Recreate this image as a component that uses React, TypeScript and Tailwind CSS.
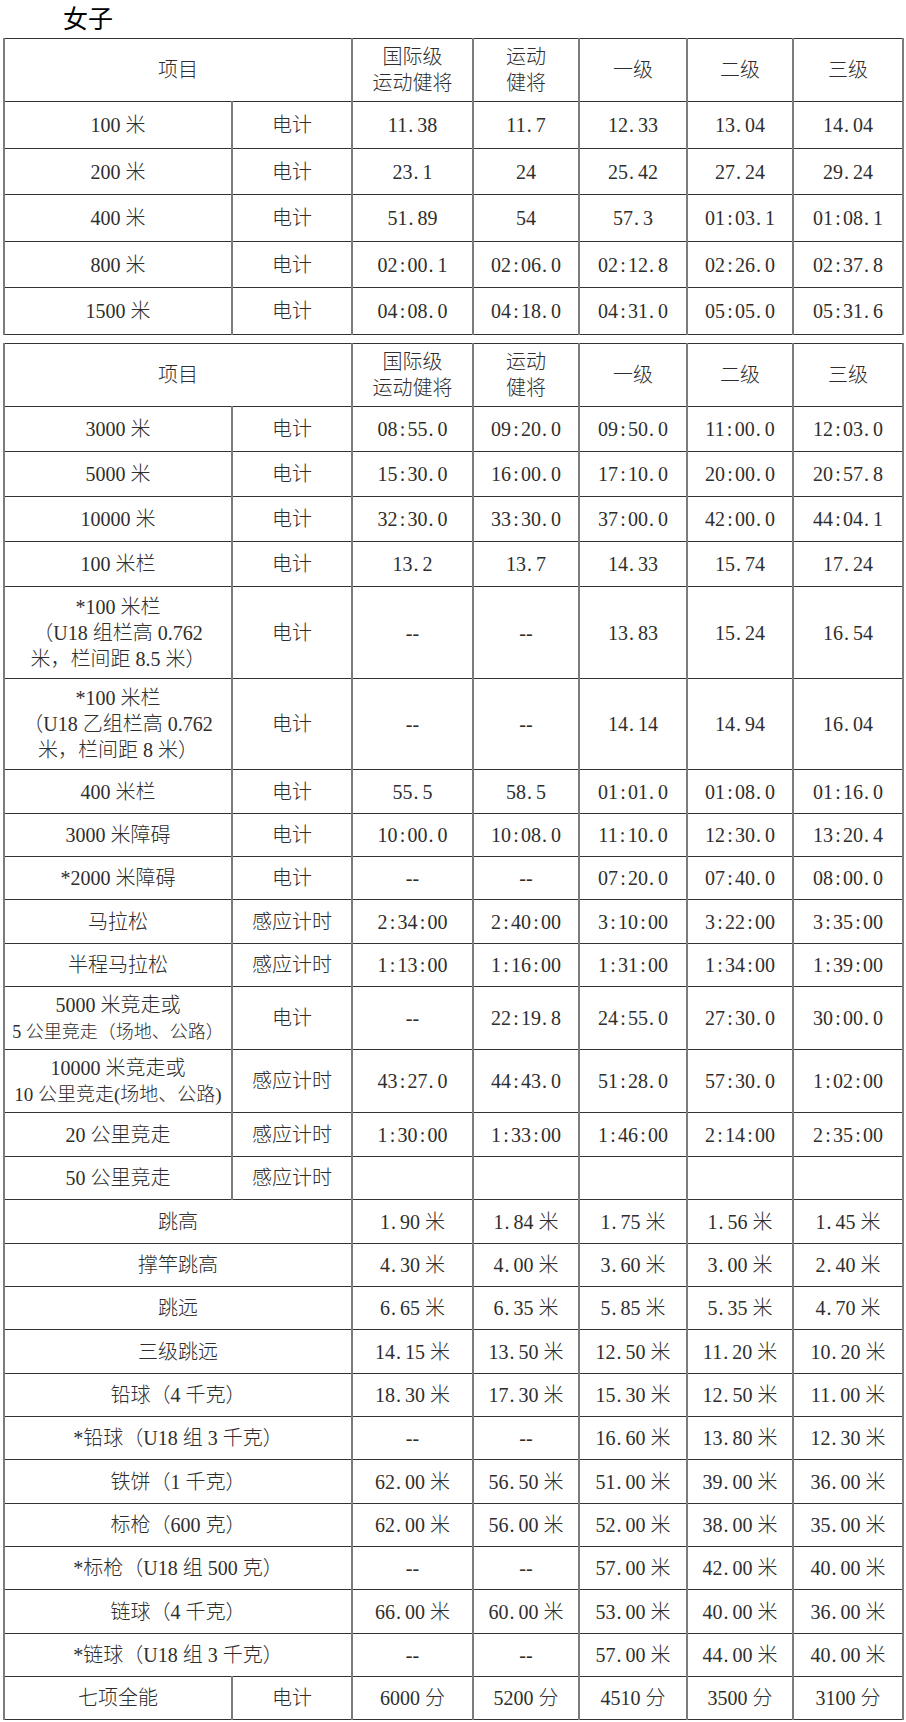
import React from "react";

type Row = {
    name: React.ReactNode;
    timing?: string;
    vals: string[];
    h: string;
};

const cell = "border-x-2 border-x-[#7c7c7c] border-y border-y-[#333] text-center align-middle p-0";

// half-width punctuation like the source document (. and : take a full digit cell)
const fmt = (v: string) =>
    v.split("").map((ch, i) =>
        ch === "." ? (
            <span key={i} className="inline-block w-[10px] pl-[1px] text-left">.</span>
        ) : ch === ":" ? (
            <span key={i} className="inline-block w-[10px] text-center">:</span>
        ) : (
            ch
        )
    );

const header = (
    <tr className="h-[63px]">
        <td colSpan={2} className={cell}>项目</td>
        <td className={cell}>
            国际级
            <br />
            运动健将
        </td>
        <td className={cell}>
            运动
            <br />
            健将
        </td>
        <td className={cell}>一级</td>
        <td className={cell}>二级</td>
        <td className={cell}>三级</td>
    </tr>
);

const sprint: Row[] = [
    { name: "100 米", timing: "电计", vals: ["11.38", "11.7", "12.33", "13.04", "14.04"], h: "h-[47px]" },
    { name: "200 米", timing: "电计", vals: ["23.1", "24", "25.42", "27.24", "29.24"], h: "h-[46px]" },
    { name: "400 米", timing: "电计", vals: ["51.89", "54", "57.3", "01:03.1", "01:08.1"], h: "h-[47px]" },
    { name: "800 米", timing: "电计", vals: ["02:00.1", "02:06.0", "02:12.8", "02:26.0", "02:37.8"], h: "h-[46px]" },
    { name: "1500 米", timing: "电计", vals: ["04:08.0", "04:18.0", "04:31.0", "05:05.0", "05:31.6"], h: "h-[47px]" },
];

const rest: Row[] = [
    { name: "3000 米", timing: "电计", vals: ["08:55.0", "09:20.0", "09:50.0", "11:00.0", "12:03.0"], h: "h-[45px]" },
    { name: "5000 米", timing: "电计", vals: ["15:30.0", "16:00.0", "17:10.0", "20:00.0", "20:57.8"], h: "h-[45px]" },
    { name: "10000 米", timing: "电计", vals: ["32:30.0", "33:30.0", "37:00.0", "42:00.0", "44:04.1"], h: "h-[45px]" },
    { name: "100 米栏", timing: "电计", vals: ["13.2", "13.7", "14.33", "15.74", "17.24"], h: "h-[45px]" },
    {
        name: (
            <>
                *100 米栏
                <br />
                （U18 组栏高 0.762
                <br />
                米，栏间距 8.5 米）
            </>
        ),
        timing: "电计",
        vals: ["--", "--", "13.83", "15.24", "16.54"],
        h: "h-[92px]",
    },
    {
        name: (
            <>
                *100 米栏
                <br />
                （U18 乙组栏高 0.762
                <br />
                米，栏间距 8 米）
            </>
        ),
        timing: "电计",
        vals: ["--", "--", "14.14", "14.94", "16.04"],
        h: "h-[91px]",
    },
    { name: "400 米栏", timing: "电计", vals: ["55.5", "58.5", "01:01.0", "01:08.0", "01:16.0"], h: "h-[44px]" },
    { name: "3000 米障碍", timing: "电计", vals: ["10:00.0", "10:08.0", "11:10.0", "12:30.0", "13:20.4"], h: "h-[43px]" },
    { name: "*2000 米障碍", timing: "电计", vals: ["--", "--", "07:20.0", "07:40.0", "08:00.0"], h: "h-[43px]" },
    { name: "马拉松", timing: "感应计时", vals: ["2:34:00", "2:40:00", "3:10:00", "3:22:00", "3:35:00"], h: "h-[44px]" },
    { name: "半程马拉松", timing: "感应计时", vals: ["1:13:00", "1:16:00", "1:31:00", "1:34:00", "1:39:00"], h: "h-[43px]" },
    {
        name: (
            <>
                5000 米竞走或
                <br />
                <span className="text-[18px] whitespace-nowrap">5 公里竞走（场地、公路）</span>
            </>
        ),
        timing: "电计",
        vals: ["--", "22:19.8", "24:55.0", "27:30.0", "30:00.0"],
        h: "h-[63px]",
    },
    {
        name: (
            <>
                10000 米竞走或
                <br />
                <span className="text-[19px] whitespace-nowrap">10 公里竞走(场地、公路)</span>
            </>
        ),
        timing: "感应计时",
        vals: ["43:27.0", "44:43.0", "51:28.0", "57:30.0", "1:02:00"],
        h: "h-[63px]",
    },
    { name: "20 公里竞走", timing: "感应计时", vals: ["1:30:00", "1:33:00", "1:46:00", "2:14:00", "2:35:00"], h: "h-[44px]" },
    { name: "50 公里竞走", timing: "感应计时", vals: ["", "", "", "", ""], h: "h-[43px]" },
    { name: "跳高", vals: ["1.90 米", "1.84 米", "1.75 米", "1.56 米", "1.45 米"], h: "h-[44px]" },
    { name: "撑竿跳高", vals: ["4.30 米", "4.00 米", "3.60 米", "3.00 米", "2.40 米"], h: "h-[43px]" },
    { name: "跳远", vals: ["6.65 米", "6.35 米", "5.85 米", "5.35 米", "4.70 米"], h: "h-[43px]" },
    { name: "三级跳远", vals: ["14.15 米", "13.50 米", "12.50 米", "11.20 米", "10.20 米"], h: "h-[44px]" },
    { name: "铅球（4 千克）", vals: ["18.30 米", "17.30 米", "15.30 米", "12.50 米", "11.00 米"], h: "h-[43px]" },
    { name: "*铅球（U18 组 3 千克）", vals: ["--", "--", "16.60 米", "13.80 米", "12.30 米"], h: "h-[43px]" },
    { name: "铁饼（1 千克）", vals: ["62.00 米", "56.50 米", "51.00 米", "39.00 米", "36.00 米"], h: "h-[44px]" },
    { name: "标枪（600 克）", vals: ["62.00 米", "56.00 米", "52.00 米", "38.00 米", "35.00 米"], h: "h-[43px]" },
    { name: "*标枪（U18 组 500 克）", vals: ["--", "--", "57.00 米", "42.00 米", "40.00 米"], h: "h-[43px]" },
    { name: "链球（4 千克）", vals: ["66.00 米", "60.00 米", "53.00 米", "40.00 米", "36.00 米"], h: "h-[44px]" },
    { name: "*链球（U18 组 3 千克）", vals: ["--", "--", "57.00 米", "44.00 米", "40.00 米"], h: "h-[43px]" },
    { name: "七项全能", timing: "电计", vals: ["6000 分", "5200 分", "4510 分", "3500 分", "3100 分"], h: "h-[43px]" },
];

const Cols = () => (
    <colgroup>
        <col className="w-[228px]" />
        <col className="w-[120px]" />
        <col className="w-[121px]" />
        <col className="w-[106px]" />
        <col className="w-[108px]" />
        <col className="w-[106px]" />
        <col className="w-[110px]" />
    </colgroup>
);

const Body = ({ rows }: { rows: Row[] }) => (
    <tbody>
        {header}
        {rows.map((r, i) => (
            <tr key={i} className={r.h}>
                {r.timing ? (
                    <>
                        <td className={cell}>{r.name}</td>
                        <td className={cell}>{r.timing}</td>
                    </>
                ) : (
                    <td colSpan={2} className={cell}>{r.name}</td>
                )}
                {r.vals.map((v, j) => (
                    <td key={j} className={cell + " whitespace-nowrap"}>{fmt(v)}</td>
                ))}
            </tr>
        ))}
    </tbody>
);

export default function App() {
    return (
        <div className="bg-white w-[906px] h-[1722px] overflow-hidden pl-[3px]">
            <div className="h-[38px] pl-[60px] text-[25px] leading-[34px] text-black font-['Noto_Sans_CJK_SC',sans-serif]">
                女子
            </div>
            <div className="font-['Liberation_Serif','Noto_Sans_CJK_SC',serif] font-light text-[20px] leading-[26px] text-[#2e2e2e]">
                {/* 短跑 */}
                <table className="w-[899px] table-fixed border-collapse">
                    <Cols />
                    <Body rows={sprint} />
                </table>
                {/* 中长跑、跨栏、竞走、田赛 */}
                <table className="w-[899px] table-fixed border-collapse mt-[8px]">
                    <Cols />
                    <Body rows={rest} />
                </table>
            </div>
        </div>
    );
}
